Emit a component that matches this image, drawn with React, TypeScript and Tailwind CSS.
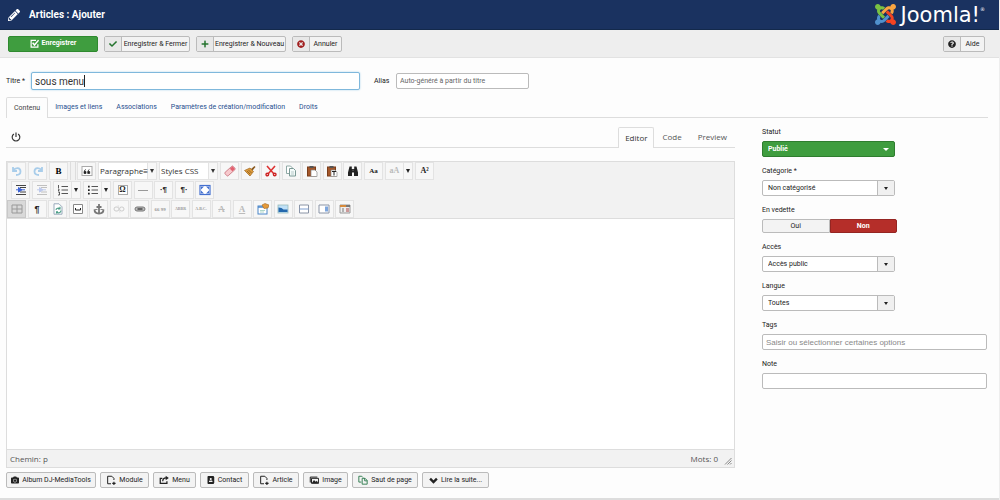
import { useState } from "react";
import type { ReactNode } from "react";
import { FaCheck, FaPlus, FaTimesCircle, FaQuestionCircle, FaCamera, FaAddressBook, FaPencilAlt } from "react-icons/fa";

const ui = "font-['Roboto','Liberation_Sans',sans-serif]";
const sans = "font-['Liberation_Sans',Arial,sans-serif]";
const humanist = "font-['Open_Sans','Noto_Sans',sans-serif]";

type Tool = { name: string; icon: ReactNode; pressed?: boolean };

function Svg({ children, size = "size-3" }: { children: ReactNode; size?: string }) {
  return (
    <svg viewBox="0 0 12 12" className={`${size} shrink-0`} fill="none" stroke="currentColor" aria-hidden="true">
      {children}
    </svg>
  );
}

const glyph = "font-['Liberation_Serif',serif] font-bold leading-none";

const undoPath = "M2 2v4h4M2.5 5.5C4 2.5 9.5 2 9.500 6.500 9.500 9 7.500 10 5 10";

const undo: Tool = { name: "Annuler la frappe", icon: <Svg><path d={undoPath} stroke="#a9cdea" strokeWidth="1.8" /></Svg> };
const redo: Tool = { name: "Rétablir", icon: <Svg><path d={undoPath} transform="matrix(-1 0 0 1 12 0)" stroke="#a9cdea" strokeWidth="1.8" /></Svg> };
const bold: Tool = { name: "Gras", icon: <span className={`${glyph} text-[9px] text-black`}>B</span> };
const quote: Tool = {
  name: "Citation",
  icon: (
    <Svg>
      <rect x="1" y="1.500" width="10" height="9" stroke="#aaa" fill="#fff" />
      <path d="M3 6.500h2v2H3zM3.400 6.500c0-1 .4-1.600 1.300-2M6.700 6.500h2v2h-2zM7.100 6.500c0-1 .4-1.600 1.300-2" fill="#222" stroke="#222" strokeWidth=".7" />
    </Svg>
  ),
};

const clipboard = (letter: boolean) => (
  <Svg>
    <rect x="1.500" y="2" width="8" height="9" fill="#a4572a" stroke="#7a3d1a" />
    <rect x="3.500" y="1" width="4" height="2" fill="#555" stroke="none" />
    <path d="M5 5h4l2 2v4.500H5z" fill="#fff" stroke="#888" strokeWidth=".7" />
    {letter && <path d="M6 6.500h4M8 6.500v4" stroke="#222" />}
  </Svg>
);

const rowOneRight: Tool[] = [
  { name: "Effacer", icon: <Svg><g transform="rotate(-42 6 6)"><rect x=".5" y="3.700" width="11" height="4.600" rx="1" fill="#f7c9cd" stroke="#c9747f" strokeWidth=".8" /><path d="M7.500 4.200H11v3.600H7.500z" fill="#e2606f" stroke="none" /></g></Svg> },
  { name: "Nettoyer", icon: <Svg><path d="M7 4l3.500-3 1 1L8.500 5.500z" fill="#8a5a20" stroke="none" /><path d="M.5 5.500L6 3l3.500 3.500L6 11z" fill="#dc9c3c" stroke="#9d6420" strokeWidth=".7" /><path d="M3 6l3 3M4.500 5l3 3" stroke="#734512" strokeWidth=".6" /></Svg> },
  { name: "Couper", icon: <Svg><path d="M2 1l7 8M10 1L3 9" stroke="#d33" strokeWidth="1.600" /><circle cx="2.300" cy="9.500" r="1.300" stroke="#c22" strokeWidth="1.400" /><circle cx="9.700" cy="9.500" r="1.300" stroke="#c22" strokeWidth="1.400" /></Svg> },
  { name: "Copier", icon: <Svg><path d="M1.500 1h4l2 2v5.500h-6z" fill="#fff" stroke="#8fa9a5" /><path d="M4.500 3.500h4l2 2V11h-6z" fill="#f4fbfa" stroke="#7b9995" /><path d="M6 7h3M6 9h3" stroke="#9db8b4" strokeWidth=".7" /></Svg> },
  { name: "Coller", icon: clipboard(false) },
  { name: "Coller en texte", icon: clipboard(true) },
  { name: "Rechercher", icon: <Svg><path d="M2.500 1.500h2.300V4h2.400V1.500h2.300l1.500 6V11H7V7.500H5V11H1V7.500z" fill="#222" stroke="none" /><path d="M5.300 5.200h1.400" stroke="#888" strokeWidth=".8" /></Svg> },
  { name: "Casse", icon: <span className={`${glyph} text-[7px] text-[#222]`}>Aa</span> },
];

const listIcon = (numbered: boolean) => (
  <Svg>
    <path d="M4.500 2.500H11M4.500 6H11M4.500 9.500H11" stroke="#555" />
    {numbered ? <path d="M1.500 1v3M1 5h1v1.500H1M1 8h1.500v3H1" stroke="#333" strokeWidth=".8" /> : <path d="M1 1.700h1.700v1.700H1zM1 5.200h1.700v1.700H1zM1 8.700h1.700v1.700H1z" fill="#222" stroke="none" />}
  </Svg>
);

const indentIcon = (
  <Svg>
    <path d="M1 1.500h10M5 3.500h6M5 8h6M1 10.500h10" stroke="#444" />
    <path d="M1 5.800h2.500V3.500L7 5.800 3.500 8.100V5.800M6 5.800h4" fill="#3b62d6" stroke="#3b62d6" />
  </Svg>
);

const rowThree: Tool[] = [
  { name: "Tableau", pressed: true, icon: <Svg><path d="M1 2h10v8H1zM6 2v8M1 6h10" stroke="#999" /></Svg> },
  { name: "Caractères invisibles", icon: <span className={`${sans} text-[9px] leading-none font-bold text-[#222]`}>¶</span> },
  { name: "Modèle", icon: <Svg><path d="M2 .8h5l3 3v7.400H2z" fill="#fff" stroke="#9ab" /><path d="M4 7c0-2 3-2.500 4-1M8 3.800V6H6M9 7.500c0 2.500-3 3-4.500 1.500M4.500 10.500V8.800H6" stroke="#4b9d86" strokeWidth="1.100" /></Svg> },
  { name: "Espace insécable", icon: <Svg><path d="M1.500 1.500h9v9h-9z" fill="#fff" stroke="#888" /><path d="M3.500 5v2h5V5" stroke="#222" /></Svg> },
  { name: "Ancre", icon: <Svg><path d="M6 1v10M3.500 4h5M1.500 6.500c0 3 2 4 4.500 4s4.500-1 4.500-4" stroke="#777" strokeWidth="1.800" /><path d="M1.500 6.500h3M7.500 6.500h3" stroke="#888" /></Svg> },
  { name: "Supprimer le lien", icon: <Svg><rect x="1" y="4" width="5" height="4" rx="2" stroke="#ccc" /><rect x="6.500" y="4" width="4.500" height="4" rx="2" stroke="#ccc" /><path d="M5 2l2 8" stroke="#ddd" strokeWidth=".7" /></Svg> },
  { name: "Lien", icon: <Svg><rect x="1" y="4" width="10" height="4" rx="2" fill="#bbb" stroke="#777" /><path d="M3.500 6h5" stroke="#444" strokeWidth="1.400" /></Svg> },
  { name: "Citation courte", icon: <span className={`${glyph} text-[5px] text-[#999]`}>66 99</span> },
  { name: "Abréviation", icon: <span className={`${glyph} text-[4px] text-[#999]`}>ABBR</span> },
  { name: "Acronyme", icon: <span className={`${glyph} text-[4px] text-[#999]`}>A.B.C.</span> },
  { name: "Texte supprimé", icon: <span className={`${glyph} text-[9px] text-[#bbb] line-through`}>A</span> },
  { name: "Texte inséré", icon: <span className={`${glyph} text-[9px] text-[#bbb] underline`}>A</span> },
  { name: "Attributs", icon: <Svg><rect x="1" y="3" width="9" height="8" fill="#fff" stroke="#4b86c8" /><path d="M1 4h9" stroke="#4b86c8" strokeWidth="1.500" /><path d="M5 2l3-1.500 4 1.500-1 3-4 .5z" fill="#e49a3b" stroke="#a8681c" strokeWidth=".6" /><path d="M3 7.500h5M3 9h4" stroke="#9cb" strokeWidth=".8" /></Svg> },
  { name: "Insérer une image", icon: <Svg><rect x="1" y="2" width="10" height="8" fill="#bfe0f7" stroke="#9bb" strokeWidth=".8" /><path d="M1.500 9V4.500l3 .5 2 1.500h4V9z" fill="#2468ad" stroke="none" /></Svg> },
  { name: "Saut de page", icon: <Svg><path d="M1.500 2h9v8h-9z" fill="#fff" stroke="#8a94a6" /><path d="M1.500 6h9" stroke="#7f9fd0" /></Svg> },
  { name: "Lire la suite", icon: <Svg><path d="M1 2h10v8H1z" fill="#fff" stroke="#8a94a6" /><path d="M7 3.500h3v5H7z" fill="#7ea6dd" stroke="none" /></Svg> },
  { name: "Article", icon: <Svg><path d="M1 2h10v8H1z" fill="#eee" stroke="#999" /><path d="M1 3h6" stroke="#d78a3c" strokeWidth="2" /><path d="M7 3h4" stroke="#777" strokeWidth="2" /><path d="M3 6h2M3 8h2" stroke="#777" /><path d="M7 5h3v4H7z" fill="#c99" stroke="none" /></Svg> },
];

function ToolButton({ tool }: { tool: Tool }) {
  return (
    <button type="button" aria-label={tool.name} aria-pressed={tool.pressed} className={`flex h-[18px] w-[19px] shrink-0 items-center justify-center border ${tool.pressed ? "border-[#c8c8c8] bg-[#d9d9d9]" : "border-[#e3e3e3] bg-[#f7f7f7]"}`}>
      {tool.icon}
    </button>
  );
}

function ArrowButton({ name }: { name: string }) {
  return (
    <button type="button" aria-label={name} className="flex h-[18px] w-[9px] shrink-0 items-center justify-center border border-l-0 border-[#e3e3e3] bg-[#f7f7f7]">
      <span className="border-x-2 border-t-[4px] border-x-transparent border-t-current" />
    </button>
  );
}

function DropLabel({ text }: { text: string }) {
  return (
    <button type="button" className="h-[18px] w-[50px] border border-[#e3e3e3] bg-white pl-px text-left whitespace-nowrap">
      {text}
    </button>
  );
}

function ActionButton({ icon, label, width }: { icon: ReactNode; label: string; width: string }) {
  return (
    <button type="button" className={`${width} flex h-4 items-stretch rounded-xs border border-[#bbb] bg-[#f3f3f3] text-[#222]`}>
      <span className="flex w-[17px] shrink-0 items-center justify-center border-r border-[#bbb] bg-[#e8e8e8]">{icon}</span>
      <span className="flex-1 text-center leading-[14px] whitespace-nowrap">{label}</span>
    </button>
  );
}

function Select({ id, label, options, green = false }: { id: string; label: string; options: string[]; green?: boolean }) {
  return (
    <div>
      <label htmlFor={id} className="mb-[3px] block h-3 leading-3">{label}</label>
      <div className="grid w-[133px]">
        <select id={id} className={`col-start-1 row-start-1 h-4 appearance-none rounded-xs border pl-[5px] leading-[14px] ${green ? "border-[#2f7d2f] bg-[#3f9d3f] font-bold text-white" : "border-[#bbb] bg-white text-[#222]"}`}>
          {options.map((option) => (
            <option key={option}>{option}</option>
          ))}
        </select>
        <span className={`pointer-events-none col-start-1 row-start-1 m-px flex w-[17px] items-center justify-center justify-self-end ${green ? "text-white" : "border-l border-[#bbb] bg-[#f0f0f0] text-[#222]"}`}>
          <span className={`border-t-[3px] border-x-transparent border-t-current ${green ? "border-x-[3px]" : "border-x-2"}`} />
        </span>
      </div>
    </div>
  );
}

function JoomlaMark() {
  return (
    <svg viewBox="0 32 448 448" className="size-[21px]" aria-hidden="true">
      <path fill="#7ac143" d="M.6 92.100C.6 58.800 27.400 32 60.400 32c30 0 54.500 21.900 59.200 50.200 32.600-7.600 67.100.6 96.500 30l-44.300 44.300c-20.500-20.500-42.600-16.300-55.400-3.500-14.300 14.300-14.300 37.900 0 52.200l99.500 99.500-44 44.300c-87.700-87.200-49.700-49.700-99.800-99.700-26.800-26.500-35-64.800-24.800-98.900C20.400 144.600.6 120.700.6 92.100z" />
      <path fill="#f9a541" d="M130.100 208.500l44.300 44.300c10-10 89.700-89.700 99.700-99.800 14.300-14.300 37.600-14.300 51.900 0 12.800 12.800 17 35-3.500 55.400l44 44.300c31.200-31.200 38.500-67.600 28.900-101.200 29.200-4.100 51.900-29.200 51.900-59.500 0-33.200-26.800-60.100-59.800-60.100-30.300 0-55.400 22.500-59.500 51.600-33.800-9.900-71.700-1.500-98.300 25.100-18.300 19.100-71.100 71.500-99.600 99.900z" />
      <path fill="#f44321" d="M396.400 360.700c8.200-32.700-.9-68.500-26.300-93.900-11.800-12.200 5 4.700-99.500-99.700l-44.300 44.300 99.700 99.700c14.300 14.300 14.300 37.600 0 51.900-12.800 12.800-35 17-55.400-3.500l-44 44.300c27.600 30.200 68 38.800 102.700 28 5.500 27.400 29.700 48.100 58.900 48.100 33 0 59.800-26.800 59.800-60.100 0-30.200-22.500-55-51.600-59.100z" />
      <path fill="#5091cd" d="M312.100 307.600l-44-44.300c-87 86.400-50.400 50.400-99.700 99.800-14.300 14.300-37.600 14.300-51.900 0-13.100-13.400-16.900-35.300 3.200-55.400l-44-44.300c-30.200 30.200-38 65.200-29.500 98.300-26.700 6-46.200 29.900-46.200 58.200C0 453.200 26.800 480 59.800 480c28.600 0 52.500-19.800 58.600-46.700 32.700 8.200 68.500-.6 94.200-26 32.100-32 12.200-12.400 99.500-99.700z" />
    </svg>
  );
}

const fileAdd = <Svg size="size-[10px]"><path d="M6 10.500H2v-9h5l2.500 2.500V6" strokeWidth="1.200" /><path d="M9.500 8v4M7.500 10h4" strokeWidth="1.400" /></Svg>;

const insertButtons = [
  { label: "Album DJ-MediaTools", width: "w-[90px]", icon: <FaCamera className="size-2 shrink-0" /> },
  { label: "Module", width: "w-[49px]", icon: fileAdd },
  { label: "Menu", width: "w-[43px]", icon: <Svg size="size-[10px]"><path d="M4 4H1.500v6h8V7.500M4.500 7.500c0-3 1.500-4 4-4" strokeWidth="1.500" /><path d="M8 .8L11.800 3.500 8 6.200z" fill="currentColor" stroke="none" /></Svg> },
  { label: "Contact", width: "w-[49px]", icon: <FaAddressBook className="size-2 shrink-0" /> },
  { label: "Article", width: "w-[46px]", icon: fileAdd },
  { label: "Image", width: "w-[45px]", icon: <Svg size="size-[10px]"><path d="M1.500 9V2.500H10M3 4h8.500v6H3z" strokeWidth="1.200" /><path d="M3.500 9.500L6 6l2 2 1.500-1 1.500 2.500z" fill="currentColor" stroke="none" /></Svg> },
  { label: "Saut de page", width: "w-[66px]", icon: <Svg size="size-[10px]"><path d="M4 8.500H1v-7h3.500L6 3" stroke="#2c7a4b" strokeWidth="1.100" /><path d="M5 4h3.500L11 6.500V11H5zM8 4v3h3" stroke="#2c7a4b" strokeWidth="1.100" /></Svg> },
  { label: "Lire la suite...", width: "w-[67px]", icon: <Svg size="size-[9px]"><path d="M1.500 3.500L6 8l4.500-4.500" strokeWidth="3.200" /></Svg> },
];

const tabs = ["Contenu", "Images et liens", "Associations", "Paramètres de création/modification", "Droits"];

export default function App() {
  const [title, setTitle] = useState("sous menu");

  return (
    <div className={`${ui} border-r border-[#eee] bg-[#fdfdfd] text-[7px] text-[#222]`}>
      <header className="flex h-[30px] items-center justify-between border-b border-[#13294b] bg-[#1a3260] pr-[14px] pl-2 text-white">
        <h1 className="flex items-center gap-[9px] text-[10px] leading-4 font-bold">
          <FaPencilAlt className="size-3" />
          Articles : Ajouter
        </h1>
        <a href="#" className="flex items-center gap-[5px] font-['DejaVu_Sans',sans-serif] text-[21px] leading-6">
          <JoomlaMark />
          <span className="flex items-start">Joomla!<span className="text-[5px] leading-3">®</span></span>
        </a>
      </header>

      <div className="flex h-7 items-center justify-between border-b border-[#e2e2e2] bg-[#eee] pr-[14px] pl-2">
        <div className="flex gap-[6px]">
          <button type="button" className="flex h-4 w-[90px] items-center justify-center gap-[3px] rounded-xs border border-[#2f8a2f] bg-[#3f9d3f] font-bold text-white">
            <Svg size="size-[9px]"><path d="M8 1.800H1.500v9h9V7" strokeWidth="1.600" /><path d="M3.500 5l2.500 3L11.500 1.500" strokeWidth="2" /></Svg>
            Enregistrer
          </button>
          <ActionButton width="w-[86px]" icon={<FaCheck className="size-2 text-[#26742f]" />} label="Enregistrer & Fermer" />
          <ActionButton width="w-[90px]" icon={<FaPlus className="size-2 text-[#26742f]" />} label="Enregistrer & Nouveau" />
          <ActionButton width="w-[50px]" icon={<FaTimesCircle className="size-2 text-[#a11f1f]" />} label="Annuler" />
        </div>
        <ActionButton width="w-[42px]" icon={<FaQuestionCircle className="size-2" />} label="Aide" />
      </div>

      <div className="flex items-center pt-[14px] pl-[6px]">
        <label htmlFor="title" className="w-[25px]">Titre *</label>
        <div className="grid w-[329px] text-[10px] text-[#333]">
          <input id="title" value={title} onChange={(e) => setTitle(e.target.value)} className="col-start-1 row-start-1 h-[18px] rounded-xs border border-[#7fb8dc] bg-white px-[3px] caret-transparent shadow-[0_0_2px_#a5d0ea] outline-none" />
          {/* caret drawn after a hidden copy of the value */}
          <span aria-hidden="true" className="pointer-events-none col-start-1 row-start-1 flex items-center pl-1 whitespace-pre">
            <span className="invisible">{title}</span>
            <span className="h-3 w-px bg-[#222]" />
          </span>
        </div>
        <label htmlFor="alias" className="ml-[14px] w-[22px]">Alias</label>
        <input id="alias" placeholder="Auto-généré à partir du titre" className="h-4 w-[133px] rounded-xs border border-[#bbb] bg-white px-[3px] outline-none placeholder:text-[#666]" />
      </div>

      <nav className="mt-[7px] mr-[11px] ml-[6px] flex h-[21px] border-b border-[#ddd]">
        {tabs.map((tab, i) => (
          <a key={tab} href="#" className={`h-[21px] px-[7px] leading-5 ${i === 0 ? "rounded-t-xs border border-b-0 border-[#ddd] bg-[#fdfdfd] text-[#444]" : "text-[#1f4f8f]"}`}>
            {tab}
          </a>
        ))}
      </nav>

      <div className="flex gap-[27px] pr-3 pl-[6px]">
        <main className="min-w-0 flex-1 pt-[9px]">
          <div className={`${humanist} flex h-[21px] items-stretch justify-between border-b border-[#ddd] pl-[5px] text-[8px] text-[#555]`}>
            <button type="button" aria-label="Activer l'éditeur" className="text-[#333]">
              <Svg size="size-[10px]"><path d="M6 .5v5.500M3.500 2.300a4.600 4.600 0 1 0 5 0" strokeWidth="1.400" /></Svg>
            </button>
            <div className="flex">
              <button type="button" className="h-[21px] rounded-t-xs border border-b-0 border-[#ddd] bg-[#fdfdfd] px-[6px] text-[#333]">Editor</button>
              <button type="button" className="px-2">Code</button>
              <button type="button" className="px-2">Preview</button>
            </div>
          </div>

          <section className="mt-[13px] border border-[#ddd] bg-white">
            <div className="flex flex-col gap-px border-b border-[#ddd] bg-[#f2f2f2] text-[#222]">
              <div className="flex">
                <div className="flex w-[61px] justify-between"><ToolButton tool={undo} /><ToolButton tool={redo} /><ToolButton tool={bold} /></div>
                <span className="ml-[2px] w-px bg-[#ddd]" />
                <span className="mr-px ml-1 w-px bg-[#ddd]" />
                <div className="flex gap-[2px]">
                  <ToolButton tool={quote} />
                  <div className={`${humanist} flex text-[8px] text-[#333]`}>
                    <DropLabel text="Paragraphe≡" />
                    <ArrowButton name="Formats" />
                  </div>
                  <div className={`${humanist} flex text-[8px] text-[#333]`}>
                    <DropLabel text="Styles CSS" />
                    <ArrowButton name="Styles" />
                  </div>
                  <div className="flex w-[163px] justify-between">
                    {rowOneRight.map((tool) => <ToolButton key={tool.name} tool={tool} />)}
                  </div>
                  <div className="flex">
                    <ToolButton tool={{ name: "Langue", icon: <span className={`${glyph} text-[8px] text-[#bbb]`}>aA</span> }} />
                    <ArrowButton name="Langues" />
                  </div>
                  <ToolButton tool={{ name: "Taille", icon: <span className={`${glyph} text-[8px]`}>A²</span> }} />
                </div>
              </div>
              <div className="flex gap-[2px] pl-1">
                <ToolButton tool={{ name: "Augmenter le retrait", icon: indentIcon }} />
                <ToolButton tool={{ name: "Diminuer le retrait", icon: <span className="opacity-30">{indentIcon}</span> }} />
                <div className="flex"><ToolButton tool={{ name: "Liste numérotée", icon: listIcon(true) }} /><ArrowButton name="Numérotation" /></div>
                <div className="flex"><ToolButton tool={{ name: "Liste à puces", icon: listIcon(false) }} /><ArrowButton name="Puces" /></div>
                <div className="flex w-[101px] justify-between">
                  <ToolButton tool={{ name: "Caractère spécial", icon: <span className="flex size-[10px] items-center justify-center border border-[#aaa] bg-white font-['Liberation_Serif',serif] text-[8px] leading-none font-bold">Ω</span> }} />
                  <ToolButton tool={{ name: "Ligne horizontale", icon: <span className="h-px w-[10px] bg-[#999]" /> }} />
                  <ToolButton tool={{ name: "Gauche à droite", icon: <span className={`${sans} text-[8px] leading-none font-bold`}>·¶</span> }} />
                  <ToolButton tool={{ name: "Droite à gauche", icon: <span className={`${sans} text-[8px] leading-none font-bold`}>¶·</span> }} />
                  <ToolButton tool={{ name: "Plein écran", icon: <Svg><rect x="1" y="1.500" width="10" height="9" fill="#fff" stroke="#4470cf" strokeWidth="1.200" /><path d="M2 2.500h3L2 5.500zM10 2.500v3L7 2.500zM2 9.500v-3l3 3zM10 9.500H7l3-3z" fill="#4470cf" stroke="none" /></Svg> }} />
                </div>
              </div>
              <div className="flex w-[347px] justify-between">
                {rowThree.map((tool) => <ToolButton key={tool.name} tool={tool} />)}
              </div>
            </div>
            <textarea aria-label="Contenu de l'article" className="block h-[230px] w-full resize-none bg-white p-2 outline-none" />
            <div className={`${humanist} flex h-[18px] items-center justify-between border-t border-[#ddd] bg-[#f2f2f2] pr-[2px] pl-[3px] text-[8px] text-[#555]`}>
              <span>Chemin: p</span>
              <span className="flex items-center gap-[6px]">
                Mots: 0
                <svg viewBox="0 0 8 8" className="size-2 self-end" stroke="#888" aria-hidden="true"><path d="M1 7.500L7.500 1M3.500 7.500l4-4M6 7.500L7.500 6" /></svg>
              </span>
            </div>
          </section>

          <div className="mt-1 flex gap-1 pb-[10px]">
            {insertButtons.map((item) => (
              <button key={item.label} type="button" className={`${item.width} flex h-4 items-center justify-center gap-[3px] rounded-xs border border-[#bbb] bg-[#f3f3f3] whitespace-nowrap`}>
                {item.icon}
                {item.label}
              </button>
            ))}
          </div>
        </main>

        <aside className="flex w-[225px] flex-col gap-2 pt-2">
          <Select id="status" label="Statut" options={["Publié"]} green />
          <Select id="category" label="Catégorie *" options={["Non catégorisé"]} />
          <fieldset>
            <legend className="mb-[3px] h-3 leading-3">En vedette</legend>
            <div className="flex h-[14px] w-[135px] text-center leading-3">
              <label className="relative flex-1 rounded-l-xs border border-[#bbb] bg-[#f3f3f3]">
                <input type="radio" name="featured" className="sr-only" />
                Oui
              </label>
              <label className="relative flex-1 rounded-r-xs border border-[#952522] bg-[#b52e29] font-bold text-white">
                <input type="radio" name="featured" defaultChecked className="sr-only" />
                Non
              </label>
            </div>
          </fieldset>
          <Select id="access" label="Accès" options={["Accès public"]} />
          <Select id="language" label="Langue" options={["Toutes"]} />
          <div>
            <label htmlFor="tags" className="mb-[3px] block h-3 leading-3">Tags</label>
            <input id="tags" placeholder="Saisir ou sélectionner certaines options" className={`${sans} block h-4 w-full rounded-xs border border-[#bbb] bg-white px-[3px] text-[8px] outline-none placeholder:text-[#888]`} />
          </div>
          <div>
            <label htmlFor="note" className="mb-[3px] block h-3 leading-3">Note</label>
            <input id="note" className="block h-4 w-full rounded-xs border border-[#bbb] bg-white px-[3px] outline-none" />
          </div>
        </aside>
      </div>
      <footer className="h-[2px] bg-[#ddd]" />
    </div>
  );
}
